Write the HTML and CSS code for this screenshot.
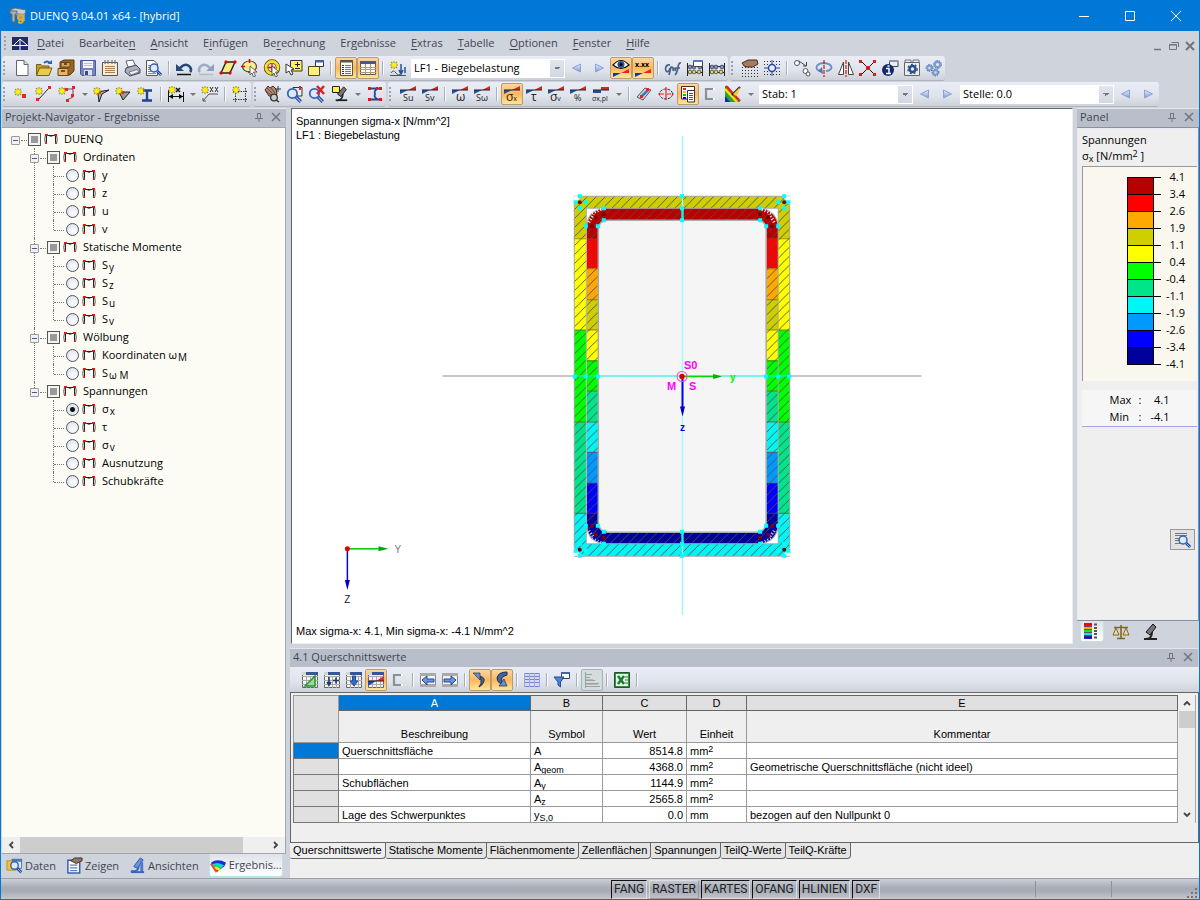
FILE: index.html
```html
<!DOCTYPE html>
<html lang="de">
<head>
<meta charset="utf-8">
<title>DUENQ 9.04.01 x64 - [hybrid]</title>
<link rel="stylesheet" href="styles.css">
</head>
<body>
<svg class="defs" aria-hidden="true">
<defs>
<pattern id="hatch" width="9" height="9" patternUnits="userSpaceOnUse"><path d="M-1 10L10-1M-1 1L1-1M8 10L10 8" stroke="#505050" stroke-width=".9" fill="none"/></pattern>
<linearGradient id="gb" x2="0" y2="1"><stop offset="0" stop-color="#e8f0ff"/><stop offset="1" stop-color="#8099d0"/></linearGradient>
</defs>
<symbol id="star" viewBox="0 0 8 8"><path d="M4 0V8M0 4H8M1 1L7 7M7 1L1 7" stroke="#a89400" stroke-width="1.1"/><circle cx="4" cy="4" r="2.300" fill="#fff200"/></symbol>
<symbol id="wave" viewBox="0 0 18 18"><path d="M1 5H9L1 9Z" fill="#24509c"/><path d="M9 5L17 1V5Z" fill="#c33020"/><path d="M1 5H17" stroke="#223" stroke-width="1"/></symbol>
<symbol id="glass" viewBox="0 0 18 18"><path d="M11.500 11.500L16 16" stroke="#23499c" stroke-width="3"/><path d="M12 12L16 16" stroke="#9db8f0" stroke-width="1"/><circle cx="8.500" cy="8.500" r="4.200" fill="#dcebfc" stroke="#3c62b4" stroke-width="1.600"/></symbol>
<symbol id="cursor" viewBox="0 0 18 18"><path d="M9 7L16 13L12.500 13L14.500 17L12.500 18L11 14L9 16Z" fill="#fff" stroke="#444" stroke-width=".8"/></symbol>
<symbol id="sheetgrid" viewBox="0 0 18 18"><path d="M1.500 1.500H16.500V16.500H1.500Z" fill="#f3f3f0" stroke="#666"/><path d="M1 5.500H17M1 9.500H17M1 13.500H17M5.500 5V17M9.500 5V17M13.500 5V17" stroke="#aaa"/><path d="M1 1H17V4H1Z" fill="#36569a"/><path d="M1 1H5V4H1Z" fill="#d5d5cf"/></symbol>
<symbol id="new" viewBox="0 0 18 18"><path d="M3.500 1.500H11L15 5.500V16.500H3.500Z" fill="#fff" stroke="#666"/><path d="M11 1.500V5.500H15" fill="#ddd" stroke="#666"/></symbol>
<symbol id="open" viewBox="0 0 18 18"><path d="M1.500 16V5.500H6L7.500 7H14V16Z" fill="#c79a22" stroke="#796019"/><path d="M1.500 16.500L4.500 9H17L14 16.500Z" fill="#e6cd52" stroke="#796019"/><path d="M9 4Q12 1 15 4" fill="none" stroke="#2a65a8" stroke-width="1.800"/><path d="M12.500 5H17V1Z" fill="#2a65a8"/></symbol>
<symbol id="cabinet" viewBox="0 0 18 18"><path d="M3 3L7 1H17V12L13 16H3Z" fill="#9a6422" stroke="#5e3b12"/><path d="M4 3.500H13V8H4Z" fill="#dca656" stroke="#6c4518"/><path d="M1 9.500H11V16.500H1Z" fill="#e8b364" stroke="#6c4518"/><path d="M7 5H10M4 12H8" stroke="#333" stroke-width="1.500"/></symbol>
<symbol id="save" viewBox="0 0 18 18"><path d="M1.500 1.500H16.500V16.500H3L1.500 15Z" fill="#7482bd" stroke="#4d5a94"/><path d="M4 2H14V9H4Z" fill="#f4f2fb"/><path d="M5 4.500H13M5 6.500H13" stroke="#bcbcd0"/><path d="M5 11H13V16.500H5Z" fill="#dfe2ee"/><path d="M6 12H9V16H6Z" fill="#334a8d"/></symbol>
<symbol id="pad" viewBox="0 0 18 18"><path d="M1.500 3.500H16.500V16.500H1.500Z" fill="#f3eedc" stroke="#5a5648"/><path d="M4 1V5M7 1V5M11 1V5M14 1V5" stroke="#777" stroke-width="1.200"/><path d="M4 7.500H14M4 9.500H14M4 11.500H14M4 13.500H14" stroke="#b17e50"/></symbol>
<symbol id="print" viewBox="0 0 18 18"><path d="M5 8L3 2L10 1L13 8Z" fill="#fff" stroke="#666"/><path d="M3 9L13 6L17 10V14L7 17L2 13Z" fill="#aab0c0" stroke="#3d4558"/><path d="M6 13L14 10.500L16 13L8 16Z" fill="#eee" stroke="#555" stroke-width=".7"/></symbol>
<symbol id="preview" viewBox="0 0 18 18"><path d="M1.500 1.500H9L12.500 5V16.500H1.500Z" fill="#fff" stroke="#555"/><path d="M3 6.500H11M3 8.500H11M3 10.500H11M3 12.500H11M3 14.500H11" stroke="#888"/><use href="#glass" x="1" y="1" width="17" height="17"/></symbol>
<symbol id="undo" viewBox="0 0 18 18"><path d="M5 9Q11 3 15 8Q17 11 15 13" fill="none" stroke="#234a7a" stroke-width="2.600"/><path d="M1 5V12H9Z" fill="#234a7a"/><path d="M2 15.500H16" stroke="#111" stroke-width="1.500"/></symbol>
<symbol id="redo" viewBox="0 0 18 18"><path d="M13 9Q7 3 3 8Q1 11 3 13" fill="none" stroke="#9cacc2" stroke-width="2.600"/><path d="M17 5V12H9Z" fill="#8fa3be"/><path d="M2 15.500H16" stroke="#bbb" stroke-width="1.500"/></symbol>
<symbol id="para" viewBox="0 0 18 18"><path d="M7 3H16L11 14H2Z" fill="#f3ee7c" stroke="#222" stroke-width="1.400"/><path d="M5 3H9M7 1V5M14 3H18M16 1V5M9 14H13M11 12V16M0 14H4M2 12V16" stroke="#e00" stroke-width="1.100"/></symbol>
<symbol id="ellsel" viewBox="0 0 18 18"><ellipse cx="8.500" cy="7.500" rx="7" ry="5.500" fill="#f7f08d" stroke="#4c4830" stroke-width="1.200"/><path d="M0 7.500H4M8.500 0V4M7 13H11" stroke="#e00" stroke-width="1.500"/><use href="#cursor" width="18" height="18"/></symbol>
<symbol id="ringsel" viewBox="0 0 18 18"><circle cx="9" cy="8.500" r="6" fill="none" stroke="#514700" stroke-width="4.400"/><circle cx="9" cy="8.500" r="6" fill="none" stroke="#f8dc2e" stroke-width="2.800"/><path d="M9 5V12M5 8.500H12" stroke="#e00" stroke-width="1.300"/><use href="#cursor" width="18" height="18"/></symbol>
<symbol id="plussel" viewBox="0 0 18 18"><path d="M5.500 1.500H17V12H5.500Z" fill="#fff15a" stroke="#333"/><path d="M10 5.500H15M12.500 3V8M10 9.500H15" stroke="#222"/><path d="M1 5L9 10L6 11L8 15L6 16L4 12L1 14Z" fill="#fff" stroke="#333"/></symbol>
<symbol id="winsel" viewBox="0 0 18 18"><path d="M1.500 7.500H12.500V16.500H1.500Z" fill="#fff07a" stroke="#554c12"/><path d="M8.500 1.500H16.500V7.500H8.500Z" fill="#fff" stroke="#334"/><path d="M8 1H17V3.500H8Z" fill="#46639e"/></symbol>
<symbol id="navi" viewBox="0 0 18 18"><path d="M3.500 1.500H15.500V16.500H3.500Z" fill="#fbfbf6" stroke="#5a5340"/><path d="M3 2.500H16" stroke="#555" stroke-width="2"/><path d="M5 6.500H7M5 8.500H7M5 10.500H7M5 12.500H7M5 14.500H7" stroke="#333"/><path d="M8 6.500H14M8 8.500H14M8 10.500H14M8 12.500H14M8 14.500H14" stroke="#777"/></symbol>
<symbol id="table" viewBox="0 0 18 18"><path d="M1.500 2.500H16.500V15.500H1.500Z" fill="#fffdf2" stroke="#5c5c5c"/><path d="M1 2H17V5H1Z" fill="#4b568a"/><path d="M1 8.500H17M1 10.500H17M1 13.500H17M6.500 5V15M11.500 5V15" stroke="#a89880"/></symbol>
<symbol id="loadcase" viewBox="0 0 18 18"><use href="#star" x="1" y="2" width="8" height="8"/><path d="M2 14Q4 10 7 14T12 14" fill="none" stroke="#555"/><path d="M12 5V14M10 11L12 15L14 11M16 8V14" stroke="#265499" stroke-width="1.500" fill="none"/><path d="M1 16.500H17" stroke="#555"/></symbol>
<symbol id="left" viewBox="0 0 18 18"><path d="M12.500 5V13L4.500 9Z" fill="url(#gb)" stroke="#8ba3d6"/></symbol>
<symbol id="right" viewBox="0 0 18 18"><path d="M5.500 5V13L13.500 9Z" fill="url(#gb)" stroke="#8ba3d6"/></symbol>
<symbol id="eye" viewBox="0 0 18 18"><path d="M1 6Q9-3 17 6Q9 13 1 6Z" fill="#f8f8ff" stroke="#111" stroke-width="1.200"/><circle cx="9" cy="5.500" r="3.500" fill="#275299"/><circle cx="9" cy="5.500" r="1.500" fill="#000"/><path d="M1 14H9L1 18Z" fill="#1235a8"/><path d="M9 14L17 10V14Z" fill="#e22"/></symbol>
<symbol id="redblue" viewBox="0 0 18 18"><path d="M1 14H9L1 18Z" fill="#1235a8"/><path d="M9 14L17 10V14Z" fill="#e22"/></symbol>
<symbol id="grf" viewBox="0 0 18 18"><path d="M6 6Q2 5 1.500 10Q2 14 5 12L6 9M5 16L7 8Q10 8 9 12M10 10Q12 8 11 12M11 16Q13 14 14 8Q15 3 17 4M11.500 9H16" fill="none" stroke="#4c6088" stroke-width="1.700"/></symbol>
<symbol id="abacus" viewBox="0 0 18 18"><path d="M1.500 4V17M16.500 4V17M1 7.500H17M1 13.500H17" stroke="#222"/><g fill="#8193d0" stroke="#333" stroke-width=".7"><circle cx="4" cy="8" r="1.900"/><circle cx="8" cy="8" r="1.900"/><circle cx="14" cy="8" r="1.900"/></g><g fill="#e0d36e" stroke="#333" stroke-width=".7"><circle cx="4" cy="13" r="1.900"/><circle cx="8" cy="13" r="1.900"/><circle cx="13" cy="13" r="1.900"/></g></symbol>
<symbol id="abacus2" viewBox="0 0 18 18"><use href="#abacus" width="18" height="18"/><path d="M7.500 1.500H16.500V7.500H7.500Z" fill="#fff" stroke="#445"/><path d="M7 1H17V3H7Z" fill="#597bbb"/></symbol>
<symbol id="handgrid" viewBox="0 0 18 18"><path d="M1 8.500H17M1 11.500H17M1 14.500H17M1 17.500H17" stroke="#333" stroke-dasharray="1 2"/><path d="M1 4L7 1H16L17 5L12 8H6L3 7Z" fill="#a67b60" stroke="#49301e"/></symbol>
<symbol id="gridcirc" viewBox="0 0 18 18"><path d="M1 2.500H17M1 5.500H17M1 12.500H17M1 15.500H17" stroke="#333" stroke-width="1.200" stroke-dasharray="1 2"/><path d="M9 1V17M1 9H17" stroke="#2846a3"/><circle cx="9" cy="9" r="3.500" fill="#e8eefb" stroke="#2846a3" stroke-width="1.500"/></symbol>
<symbol id="move" viewBox="0 0 18 18"><circle cx="4" cy="4" r="2.500" fill="#fff" stroke="#555"/><circle cx="12.500" cy="12" r="2.500" fill="#fff" stroke="#555"/><circle cx="15" cy="15" r="2" fill="#fff" stroke="#555"/><path d="M6 2L13 7M10 7H13.500V3" fill="none" stroke="#444"/></symbol>
<symbol id="rotate" viewBox="0 0 18 18"><path d="M7 12Q1 12 1.500 8Q3 4 9 4Q17 5 16.500 9Q15 12 11 12" fill="none" stroke="#6c90c4" stroke-width="1.800"/><path d="M7 8L3 12L8 15Z" fill="#4e78b2"/><path d="M9 1V18" stroke="#e01010" stroke-width="1.200" stroke-dasharray="4 1"/></symbol>
<symbol id="mirror" viewBox="0 0 18 18"><path d="M6.500 3V15.500H1.500ZM11.500 3V15.500H16.500Z" fill="#fff" stroke="#444"/><path d="M9 1V18" stroke="#e01010" stroke-width="1.200" stroke-dasharray="4 1"/></symbol>
<symbol id="cross" viewBox="0 0 18 18"><path d="M2 2L16 16M16 2L2 16" stroke="#111"/><path d="M0 1H3V4H0ZM14 1H17V4H14ZM0 14H3V17H0ZM14 14H17V17H14ZM7 7H11V11H7Z" fill="#e01818"/></symbol>
<symbol id="info" viewBox="0 0 18 18"><path d="M8.500 1.500H17V7.500H8.500Z" fill="#eee" stroke="#445"/><path d="M8 1H17V3H8Z" fill="#9099a8"/><circle cx="7" cy="11" r="6" fill="#142a6e"/><path d="M5 9.500H8V14M5 14.500H10M6.500 7H8.500" stroke="#fff" stroke-width="1.500" fill="none"/></symbol>
<symbol id="optgear" viewBox="0 0 18 18"><path d="M1.500 3.500H16.500V16.500H1.500Z" fill="#eee" stroke="#666"/><path d="M2 3V1H8V3M10 3V1H16V3" stroke="#777" fill="none"/><circle cx="9.500" cy="10" r="3" fill="none" stroke="#284e91" stroke-width="2.500"/><circle cx="9.500" cy="10" r="4.700" fill="none" stroke="#284e91" stroke-width="1.300" stroke-dasharray="2 2"/></symbol>
<symbol id="gears" viewBox="0 0 18 18"><g fill="none" stroke="#7a9ad2" stroke-width="1.800"><circle cx="4.500" cy="9" r="2.100"/><circle cx="12.500" cy="5.500" r="2.500"/><circle cx="10.500" cy="13.500" r="2.100"/></g><g fill="none" stroke="#244b91" stroke-dasharray="1.200 1.200"><circle cx="4.500" cy="9" r="3.400"/><circle cx="12.500" cy="5.500" r="3.900"/><circle cx="10.500" cy="13.500" r="3.400"/></g></symbol>
<symbol id="node" viewBox="0 0 18 18"><use href="#star" x="3" y="3" width="8" height="8"/><path d="M11 9H15V13H11Z" fill="#e22"/></symbol>
<symbol id="line" viewBox="0 0 18 18"><path d="M4 15L15 3" stroke="#222"/><path d="M2 13H5V16H2ZM14 1H17V4H14Z" fill="#e22"/><use href="#star" x="1" y="2" width="8" height="8"/></symbol>
<symbol id="poly" viewBox="0 0 18 18"><path d="M5 4H15V12L9 15" stroke="#555" fill="none"/><path d="M7 3H10V6H7ZM14 1H17V4H14ZM13 9H16V12H13ZM8 14H11V17H8Z" fill="#e22"/><use href="#star" x="0" y="2" width="8" height="8"/></symbol>
<symbol id="anga" viewBox="0 0 18 18"><path d="M4 7L16 5L9 9L6 17L5 9Z" fill="#aaa" stroke="#222"/><path d="M5 6H8V9H5Z" fill="#e22"/><use href="#star" x="0" y="2" width="8" height="8"/></symbol>
<symbol id="angb" viewBox="0 0 18 18"><path d="M4 7H15L8 15Z" fill="#999" stroke="#222"/><path d="M6 6H9V9H6Z" fill="#e22"/><use href="#star" x="0" y="2" width="8" height="8"/></symbol>
<symbol id="ibeam" viewBox="0 0 18 18"><path d="M5 5.500H15M10 5V15M5 15.500H15" stroke="#1c4393" stroke-width="2.400"/><use href="#star" x="0" y="2" width="8" height="8"/></symbol>
<symbol id="dim" viewBox="0 0 18 18"><path d="M1.500 5V17M16.500 7V17M1 11.500H17" stroke="#111"/><path d="M2 11.500L6 9V14ZM16 11.500L12 9V14Z"/><path d="M9 3L13 7M13 3L9 7" stroke="#111" stroke-width="1.500"/><use href="#star" x="1" y="1" width="8" height="8"/></symbol>
<symbol id="dimxx" viewBox="0 0 18 18"><path d="M2 16L8 9H17M2 13V16H5" stroke="#555" fill="none"/><path d="M9 2L12 7M12 2L9 7M14 2L17 7M17 2L14 7" stroke="#333"/><use href="#star" x="0" y="1" width="8" height="8"/></symbol>
<symbol id="stargrid" viewBox="0 0 18 18"><path d="M4.500 3V17M14.500 3V17M2 6.500H17M2 14.500H17" stroke="#333" stroke-dasharray="1.500 1"/><use href="#star" x="1" y="1" width="8" height="8"/></symbol>
<symbol id="hand" viewBox="0 0 18 18"><path d="M1 5L4 1L6 3L9 1L12 4L13 9L10 12L5 11Z" fill="#b38a75" stroke="#4c2d22"/><path d="M3 3L8 8M6 2L11 8M2 6L7 10" stroke="#6c4535"/><path d="M14 1V7M11 4H17" stroke="#333"/><circle cx="10" cy="12.500" r="3.300" fill="#ccc" stroke="#333" stroke-width="1.300"/><path d="M12 15L15 17" stroke="#333" stroke-width="1.500"/></symbol>
<symbol id="zoomwin" viewBox="0 0 18 18"><path d="M7 2.500H16V11H7Z" fill="#eee" stroke="#333"/><path d="M14 1V5" stroke="#e22" stroke-width="2"/><use href="#glass" x="-3" y="-1" width="20" height="20"/></symbol>
<symbol id="zoomx" viewBox="0 0 18 18"><use href="#glass" x="-3" y="-1" width="20" height="20"/><path d="M9 1L16 9M16 1L9 9" stroke="#d22" stroke-width="2.500"/></symbol>
<symbol id="micro" viewBox="0 0 18 18"><path d="M3 16Q11 17 11 9" stroke="#222" stroke-width="2" fill="none"/><path d="M5 9L12 1L15 4L9 12Z" fill="#777" stroke="#111"/><path d="M5 15H16V17H5Z" fill="#222"/></symbol>
<symbol id="micro2" viewBox="0 0 18 18"><use href="#micro" x="2" width="16" height="18"/><path d="M1.500 1.500H8.500V7.500H1.500Z" fill="#fff04c" stroke="#222"/></symbol>
<symbol id="channel" viewBox="0 0 18 18"><path d="M3 3.500H15M3 14.500H15M14 3Q7 5 9 9Q7 13 14 15" stroke="#26468e" stroke-width="1.800" fill="none"/><path d="M2 2H5V5H2ZM13 2H16V5H13ZM2 13H5V16H2ZM13 13H16V16H13ZM10 2H12V4H10Z" fill="#e11"/></symbol>
<symbol id="plates" viewBox="0 0 18 18"><path d="M2 12L10 3L16 5L8 15Z" fill="#cdd5e6" stroke="#555"/><path d="M6 12L14 4" stroke="#4a72c1" stroke-width="2.500"/><path d="M11 3H14V6H11ZM5 10H8V13H5Z" fill="#e22"/></symbol>
<symbol id="target" viewBox="0 0 18 18"><ellipse cx="9" cy="9" rx="6.500" ry="5" fill="none" stroke="#333" stroke-dasharray="3 1"/><path d="M1 9H17M9 2V16" stroke="#e22" stroke-width="1.200" stroke-dasharray="6 1"/></symbol>
<symbol id="panelic" viewBox="0 0 18 18"><path d="M2.500 1.500H15.500V14H2.500Z" fill="#fff" stroke="#333"/><path d="M8.500 5.500H15.500V17H8.500Z" fill="#fff" stroke="#333"/><path d="M4 4H7" stroke="#e22" stroke-width="2"/><path d="M4 7H7" stroke="#fb0" stroke-width="2"/><path d="M4 10H7" stroke="#0b3" stroke-width="2"/><path d="M4 13H7" stroke="#00d" stroke-width="2"/><path d="M10 8.500H14M10 10.500H14M10 12.500H14M10 14.500H14" stroke="#555"/></symbol>
<symbol id="cshape" viewBox="0 0 18 18"><path d="M13 4H5V14H13" stroke="#909090" stroke-width="2.200" fill="none"/><path d="M12 4H14M12 14H14" stroke="#fff" stroke-width="2"/></symbol>
<symbol id="colors" viewBox="0 0 18 18"><path d="M1 1H4L16 17H1Z" fill="#20a23d"/><path d="M2 1L16 16" stroke="#e22" stroke-width="2.200"/><path d="M1 4L13 17" stroke="#fd0" stroke-width="2.500"/><path d="M1 11L6 17H1Z" fill="#22b"/><path d="M8 10L16 2" stroke="#222" stroke-width="2"/><path d="M9 9L16 2L14 9L12 11Z" fill="#f4cb35"/></symbol>
<symbol id="pin" viewBox="0 0 10 10"><path d="M3.500 1V6M6.500 1V6M3 1.500H7M1 6.500H9M5 7V10" fill="none" stroke="#70757e"/></symbol>
<symbol id="close" viewBox="0 0 10 10"><path d="M1 1L9 9M9 1L1 9" stroke="#70757e" stroke-width="1.500"/></symbol>
<symbol id="section" viewBox="0 0 14 12"><path d="M2.500 11V2.500H11.500V11M5 2.500Q7 4 9 2.500" fill="none" stroke="#222"/><path d="M1.500 2Q0 6 1.500 11M12.500 2Q14 6 12.500 11" fill="none" stroke="#555"/><path d="M1 1H4V3H1ZM10 1H13V3H10ZM2 9H3V11H2ZM11 9H12V11H11Z" fill="#e11"/></symbol>
<symbol id="data" viewBox="0 0 18 18"><path d="M6.500 2.500H16.500V12H6.500Z" fill="#dce6f8" stroke="#4c76b8"/><path d="M6 2H17V5H6Z" fill="#4c76b8"/><path d="M1 4H6L7 6H11V14H1Z" fill="#f2c530" stroke="#a17b18" stroke-width=".7"/><use href="#glass" x="1" y="1" width="17" height="17"/></symbol>
<symbol id="show" viewBox="0 0 18 18"><path d="M2 3.500H14.500V17H2Z" fill="#fff" stroke="#3761a9" stroke-width="1.600"/><path d="M4 8.500H12M4 11.500H12M4 14.500H12" stroke="#5d83c1" stroke-width="1.300"/><path d="M5 4L9 1H17V4L11 7Z" fill="#8d7566" stroke="#403128"/></symbol>
<symbol id="bmicro" viewBox="0 0 18 18"><path d="M2 15Q11 16 10 9" stroke="#3663bd" stroke-width="2" fill="none"/><path d="M5 10L12 1L15 3L9 12Z" fill="#6992e0" stroke="#2c56ab"/><path d="M12 3V16H15V6Z" fill="#4b76ca"/><path d="M2 15H16V17H2Z" fill="#3663bd"/></symbol>
<symbol id="rainbow" viewBox="0 0 18 18"><path d="M1 6Q8 1 17 6L15 10L7 16Z" fill="#1b2bdc"/><path d="M2 8Q8 4 15 9L7 16Z" fill="#10d8d0"/><path d="M3 10Q8 7 12 12L7 16Z" fill="#1bdc2a"/><path d="M4 11Q8 9 11 13L7 16Z" fill="#f6ef20"/><path d="M5 13L9 14L7 16Z" fill="#f11"/><path d="M1 7L7 16" stroke="#e44" stroke-width="2"/></symbol>
<symbol id="scale" viewBox="0 0 18 18"><path d="M9 2V15M2 4.500H16M5 15.500H13" stroke="#806721" stroke-width="1.600"/><path d="M1 12L4 5L7 12ZM11 12L14 5L17 12Z" fill="#e8dcae" stroke="#806721"/></symbol>
<symbol id="legend" viewBox="0 0 18 18"><path d="M1 1H9V17H1Z" fill="#555"/><path d="M1 2.500H9" stroke="#f00" stroke-width="2"/><path d="M1 6H9" stroke="#fa0" stroke-width="2"/><path d="M1 9H9" stroke="#0e0" stroke-width="2"/><path d="M1 12H9" stroke="#0ee" stroke-width="2"/><path d="M1 15.500H9" stroke="#00f" stroke-width="2"/><path d="M11 2.500H14M11 6H14M11 9H14M11 12H14M11 15.500H14" stroke="#555" stroke-width="2"/></symbol>
<symbol id="find" viewBox="0 0 18 18"><path d="M1 2.500H13M1 4.500H13M1 7.500H8M1 9.500H7M1 12.500H7" stroke="#777"/><use href="#glass" x="1" y="1" width="17" height="17"/></symbol>
<symbol id="t1" viewBox="0 0 18 18"><use href="#sheetgrid" width="18" height="18"/><path d="M4 15L14 5V15Z" fill="#9bdc94" stroke="#2b9138" stroke-width="1.500"/></symbol>
<symbol id="t2" viewBox="0 0 18 18"><use href="#sheetgrid" width="18" height="18"/><path d="M6 6V14M4 11L6 14L8 11M10 9.500H16M13 6.500V12.500" stroke="#20396e" stroke-width="1.600" fill="none"/></symbol>
<symbol id="t3" viewBox="0 0 18 18"><use href="#sheetgrid" width="18" height="18"/><path d="M7.500 5H10.500V10H13L9 15L5 10H7.500Z" fill="#3c6cc0" stroke="#204b9a"/></symbol>
<symbol id="t4" viewBox="0 0 18 18"><use href="#sheetgrid" width="18" height="18"/><path d="M1 10H9L1 15Z" fill="#2547b5"/><path d="M9 10L17 5V10Z" fill="#e22"/><path d="M1 10H17" stroke="#222"/></symbol>
<symbol id="t5" viewBox="0 0 18 18"><path d="M1.500 2.500H16.500V15.500H1.500Z" fill="#f3f3f0" stroke="#888"/><path d="M1 2H17V5H1ZM1 13H17V16H1Z" fill="#aaa"/><path d="M3 9L8 5V8H15V11H8V14Z" fill="#6e92dc" stroke="#274a9a"/></symbol>
<symbol id="t6" viewBox="0 0 18 18"><path d="M1.500 2.500H16.500V15.500H1.500Z" fill="#f3f3f0" stroke="#888"/><path d="M1 2H17V5H1ZM1 13H17V16H1Z" fill="#aaa"/><path d="M15 9L10 5V8H3V11H10V14Z" fill="#6e92dc" stroke="#274a9a"/></symbol>
<symbol id="hookr" viewBox="0 0 18 18"><path d="M8 5Q14 6 13 10Q12 14 8 16Q11 12 10 9Z" fill="#3d65a8" stroke="#1e3050"/><path d="M2 2H9V9Z" fill="#668cce" stroke="#1e3050" stroke-width=".7"/></symbol>
<symbol id="hookl" viewBox="0 0 18 18"><path d="M14 1Q5 1 4 7Q4 11 8 13L9 10Q7 6 14 4Z" fill="#3d65a8" stroke="#1e3050"/><path d="M6 15H14L11 8Z" fill="#668cce" stroke="#1e3050" stroke-width=".7"/></symbol>
<symbol id="bluet" viewBox="0 0 18 18"><path d="M1 2H17V16H1Z" fill="#d4d8f4"/><path d="M1 2.500H17M1 5.500H17M1 8.500H17M1 11.500H17M1 15.500H17" stroke="#7a84c8"/><path d="M1.500 2V16M6.500 2V16M11.500 2V16M16.500 2V16" stroke="#a0a7dc"/></symbol>
<symbol id="filter" viewBox="0 0 18 18"><path d="M8.500 1.500H16.500V7.500H8.500Z" fill="#fff" stroke="#445"/><path d="M8 1H17V3H8Z" fill="#46639e"/><path d="M1 6H11L7.500 11V16L5 14V11Z" fill="#4d83d9" stroke="#254b91"/></symbol>
<symbol id="bars" viewBox="0 0 18 18"><path d="M2.500 1V17M2 3.500H9M2 6.500H7M2 9.500H12M2 12.500H16M2 15.500H17" stroke="#90a5a6"/><path d="M3 13.500H15M3 8.500H10" stroke="#d3aab2"/></symbol>
<symbol id="xls" viewBox="0 0 18 18"><path d="M1.500 1.500H16.500V16.500H1.500Z" fill="#3c8b4c" stroke="#1d5728"/><path d="M3 3H15V15H3Z" fill="#e4f5e4"/><path d="M5 5L11 13M11 5L5 13" stroke="#1d7a33" stroke-width="2.500"/><path d="M12 6H15M12 9H15M12 12H15" stroke="#1d7a33"/></symbol>
</svg>

<div class="window">
<header class="titlebar">
  <svg class="appicon" viewBox="0 0 18 18"><path d="M1 3L6 1L17 3L16 7L8 9Z" fill="#c9d0d4" stroke="#61717b"/><path d="M1 4H8V7H6V15H3V7H1Z" fill="#a9b3b6" stroke="#5d6a70"/><path d="M8 6L16 7V14H9Z" fill="#8f9a9b"/><path d="M15 9Q9 7 9 11Q10 14 14 12V8V14Q13 17 9 15" fill="none" stroke="#e5ad25" stroke-width="2"/></svg>
  <h1>DUENQ 9.04.01 x64 - [hybrid]</h1>
  <button aria-label="Minimieren"><svg viewBox="0 0 10 10"><path d="M0 5.500H10"/></svg></button>
  <button aria-label="Maximieren"><svg viewBox="0 0 10 10"><path d="M.5.500H9.500V9.500H.5Z"/></svg></button>
  <button aria-label="Schließen"><svg viewBox="0 0 10 10"><path d="M0 0L10 10M10 0L0 10"/></svg></button>
</header>

<nav class="menubar">
  <i class="grip"></i>
  <svg class="logo" viewBox="0 0 16 13"><path d="M0 0H16V13H0Z" fill="#1d2c66"/><path d="M0 8.500H16M2 8L8 2V13M8 2L15 8" stroke="#fff" fill="none"/></svg>
  <button><u>D</u>atei</button><button>Bearbeite<u>n</u></button><button><u>A</u>nsicht</button><button>E<u>i</u>nfügen</button><button>Be<u>r</u>echnung</button><button>Er<u>g</u>ebnisse</button><button><u>E</u>xtras</button><button><u>T</u>abelle</button><button><u>O</u>ptionen</button><button><u>F</u>enster</button><button><u>H</u>ilfe</button>
  <span class="mdi"><button aria-label="Fenster minimieren"><svg viewBox="0 0 10 10"><path d="M1 8.500H8" stroke-width="1.500"/></svg></button><button aria-label="Fenster wiederherstellen"><svg viewBox="0 0 10 10"><path d="M2.500 1.500H9.500V6M.5 3.500H7.500V8.500H.5ZM0 4H8"/></svg></button><button aria-label="Fenster schließen"><svg viewBox="0 0 10 10"><path d="M1 1L9 9M9 1L1 9" stroke-width="2"/></svg></button></span>
</nav>

<div class="toolrow">
  <div class="toolbar"><i class="grip"></i>
    <button aria-label="Neu"><svg><use href="#new"/></svg></button><button aria-label="Öffnen"><svg><use href="#open"/></svg></button><button aria-label="Manager"><svg><use href="#cabinet"/></svg></button><button aria-label="Speichern"><svg><use href="#save"/></svg></button><button aria-label="Protokoll"><svg><use href="#pad"/></svg></button><button aria-label="Drucken"><svg><use href="#print"/></svg></button><button aria-label="Vorschau"><svg><use href="#preview"/></svg></button><i class="sep"></i>
    <button aria-label="Rückgängig"><svg><use href="#undo"/></svg></button><button aria-label="Wiederherstellen"><svg><use href="#redo"/></svg></button><button aria-label="Rhomboid"><svg><use href="#para"/></svg></button><button aria-label="Ellipse"><svg><use href="#ellsel"/></svg></button><button aria-label="Ring"><svg><use href="#ringsel"/></svg></button><button aria-label="Auswahl"><svg><use href="#plussel"/></svg></button><button aria-label="Spezialauswahl"><svg><use href="#winsel"/></svg></button><i class="sep"></i>
    <button class="on" aria-label="Navigator"><svg><use href="#navi"/></svg></button><button class="on" aria-label="Tabelle"><svg><use href="#table"/></svg></button><i class="sep"></i>
    <button aria-label="Lastfall neu"><svg><use href="#loadcase"/></svg></button>
    <select aria-label="Lastfall"><option>LF1 - Biegebelastung</option></select>
    <button aria-label="Zurück"><svg><use href="#left"/></svg></button><button aria-label="Vor"><svg><use href="#right"/></svg></button><button class="on" aria-label="Ergebnisse"><svg><use href="#eye"/></svg></button><button class="on" aria-label="Werte"><svg viewBox="0 0 18 18"><use href="#redblue"/><text x="1" y="8" class="glyph-b">x.xx</text></svg></button><i class="sep"></i>
    <button aria-label="Berechnung"><svg><use href="#grf"/></svg></button><button aria-label="Parameter"><svg><use href="#abacus2"/></svg></button><button aria-label="Berechnen"><svg><use href="#abacus"/></svg></button>
  </div>
  <div class="toolbar"><i class="grip"></i>
    <button aria-label="Raster"><svg><use href="#handgrid"/></svg></button><button aria-label="Rasterursprung"><svg><use href="#gridcirc"/></svg></button><i class="sep"></i>
    <button aria-label="Verschieben"><svg><use href="#move"/></svg></button><button aria-label="Drehen"><svg><use href="#rotate"/></svg></button><button aria-label="Spiegeln"><svg><use href="#mirror"/></svg></button><button aria-label="Verbinden"><svg><use href="#cross"/></svg></button><button aria-label="Info"><svg><use href="#info"/></svg></button><button aria-label="Einstellungen"><svg><use href="#optgear"/></svg></button><button aria-label="Optionen"><svg><use href="#gears"/></svg></button>
  </div>
</div>
<div class="toolrow">
  <div class="toolbar"><i class="grip slim"></i>
    <button aria-label="Knoten"><svg><use href="#node"/></svg></button><button class="wide" aria-label="Linie"><svg><use href="#line"/></svg></button><button class="wide" aria-label="Polygon"><svg><use href="#poly"/></svg></button><button class="more" aria-label="Mehr"></button><button aria-label="Winkel"><svg><use href="#anga"/></svg></button><button aria-label="Blech"><svg><use href="#angb"/></svg></button><button aria-label="Profil"><svg><use href="#ibeam"/></svg></button><i class="sep"></i>
    <button aria-label="Bemaßung"><svg><use href="#dim"/></svg></button><button class="more" aria-label="Mehr"></button><button aria-label="Kommentar"><svg><use href="#dimxx"/></svg></button><i class="sep"></i><button aria-label="Hilfslinien"><svg><use href="#stargrid"/></svg></button>
  </div>
  <div class="toolbar"><i class="grip"></i>
    <button aria-label="Bewegen"><svg><use href="#hand"/></svg></button><button aria-label="Zoom"><svg><use href="#zoomwin"/></svg></button><button aria-label="Zoom aus"><svg><use href="#zoomx"/></svg></button><button class="wide" aria-label="Sichtbarkeit"><svg><use href="#micro2"/></svg></button><button class="more" aria-label="Mehr"></button><button aria-label="Querschnitt"><svg><use href="#channel"/></svg></button>
  </div>
  <div class="toolbar"><i class="grip"></i>
    <button aria-label="Su"><svg viewBox="0 0 18 18"><use href="#wave"/><text x="4" y="16" class="glyph">Su</text></svg></button><button aria-label="Sv"><svg viewBox="0 0 18 18"><use href="#wave"/><text x="4" y="16" class="glyph">Sv</text></svg></button><i class="sep"></i><button aria-label="Omega"><svg viewBox="0 0 18 18"><use href="#wave"/><text x="5" y="16" class="glyph-l">ω</text></svg></button><button aria-label="S Omega"><svg viewBox="0 0 18 18"><use href="#wave"/><text x="3" y="16" class="glyph">Sω</text></svg></button><i class="sep"></i>
    <button class="on" aria-label="Sigma x"><svg viewBox="0 0 18 18"><use href="#wave"/><text x="3" y="16" class="glyph-l">σ<tspan class="glyph-s">x</tspan></text></svg></button><button aria-label="Tau"><svg viewBox="0 0 18 18"><use href="#wave"/><text x="6" y="16" class="glyph-l">τ</text></svg></button><button aria-label="Sigma v"><svg viewBox="0 0 18 18"><use href="#wave"/><text x="3" y="16" class="glyph-l">σ<tspan class="glyph-s">v</tspan></text></svg></button><button aria-label="Ausnutzung"><svg viewBox="0 0 18 18"><use href="#wave"/><text x="5" y="16" class="glyph">%</text></svg></button><button class="wide" aria-label="Sigma x,pl"><svg viewBox="0 0 18 18"><path d="M1 5H9V8H1Z" fill="#24509c"/><path d="M9 2H17V5H9Z" fill="#c33020"/><path d="M1 5H17" stroke="#223"/><text x="0" y="16" class="glyph-s">σx,pl</text></svg></button><button class="more" aria-label="Mehr"></button><i class="sep"></i>
    <button aria-label="Bleche"><svg><use href="#plates"/></svg></button><button aria-label="Schwerpunkt"><svg><use href="#target"/></svg></button><button class="on" aria-label="Panel"><svg><use href="#panelic"/></svg></button><button aria-label="Profil"><svg><use href="#cshape"/></svg></button><button class="wide" aria-label="Farben"><svg><use href="#colors"/></svg></button><button class="more" aria-label="Mehr"></button>
    <select aria-label="Stab"><option>Stab: 1</option></select><button aria-label="Zurück"><svg><use href="#left"/></svg></button><button aria-label="Vor"><svg><use href="#right"/></svg></button>
    <select aria-label="Stelle"><option>Stelle: 0.0</option></select><button aria-label="Zurück"><svg><use href="#left"/></svg></button><button aria-label="Vor"><svg><use href="#right"/></svg></button>
  </div>
</div>

<main class="workspace">
<aside class="navigator">
  <div class="dockhead"><h2>Projekt-Navigator - Ergebnisse</h2><button aria-label="Anheften"><svg><use href="#pin"/></svg></button><button aria-label="Schließen"><svg><use href="#close"/></svg></button></div>
  <div class="treebox">
  <ul class="tree">
    <li class="root"><button class="exp" aria-label="Einklappen"></button><label><input type="checkbox"><svg><use href="#section"/></svg>DUENQ</label>
    <ul>
      <li><button class="exp" aria-label="Einklappen"></button><label><input type="checkbox"><svg><use href="#section"/></svg>Ordinaten</label>
        <ul class="leaves">
          <li><label><input type="radio" name="res"><svg><use href="#section"/></svg>y</label></li>
          <li><label><input type="radio" name="res"><svg><use href="#section"/></svg>z</label></li>
          <li><label><input type="radio" name="res"><svg><use href="#section"/></svg>u</label></li>
          <li><label><input type="radio" name="res"><svg><use href="#section"/></svg>v</label></li>
        </ul></li>
      <li><button class="exp" aria-label="Einklappen"></button><label><input type="checkbox"><svg><use href="#section"/></svg>Statische Momente</label>
        <ul class="leaves">
          <li><label><input type="radio" name="res"><svg><use href="#section"/></svg>S<sub>y</sub></label></li>
          <li><label><input type="radio" name="res"><svg><use href="#section"/></svg>S<sub>z</sub></label></li>
          <li><label><input type="radio" name="res"><svg><use href="#section"/></svg>S<sub>u</sub></label></li>
          <li><label><input type="radio" name="res"><svg><use href="#section"/></svg>S<sub>v</sub></label></li>
        </ul></li>
      <li><button class="exp" aria-label="Einklappen"></button><label><input type="checkbox"><svg><use href="#section"/></svg>Wölbung</label>
        <ul class="leaves">
          <li><label><input type="radio" name="res"><svg><use href="#section"/></svg>Koordinaten&nbsp;ω<sub>M</sub></label></li>
          <li><label><input type="radio" name="res"><svg><use href="#section"/></svg>S<sub>ω M</sub></label></li>
        </ul></li>
      <li><button class="exp" aria-label="Einklappen"></button><label><input type="checkbox"><svg><use href="#section"/></svg>Spannungen</label>
        <ul class="leaves">
          <li><label><input type="radio" name="res" checked><svg><use href="#section"/></svg>σ<sub>x</sub></label></li>
          <li><label><input type="radio" name="res"><svg><use href="#section"/></svg>τ</label></li>
          <li><label><input type="radio" name="res"><svg><use href="#section"/></svg>σ<sub>v</sub></label></li>
          <li><label><input type="radio" name="res"><svg><use href="#section"/></svg>Ausnutzung</label></li>
          <li><label><input type="radio" name="res"><svg><use href="#section"/></svg>Schubkräfte</label></li>
        </ul></li>
    </ul></li>
  </ul>
  <div class="hscroll"><svg viewBox="0 0 16 16"><path d="M10 5L7 8L10 11"/></svg><i></i><svg viewBox="0 0 16 16"><path d="M6 5L9 8L6 11"/></svg></div>
  </div>
  <div class="docktabs">
    <button><svg><use href="#data"/></svg>Daten</button><button><svg><use href="#show"/></svg>Zeigen</button><button><svg><use href="#bmicro"/></svg>Ansichten</button><button class="cur"><svg><use href="#rainbow"/></svg>Ergebnis...</button>
  </div>
</aside>

<div class="right">
<div class="upper">
<section class="canvas">
  <svg class="drawing" viewBox="291 108 780 535" role="img" aria-label="Querschnitt">
    <path d="M442 375.500H573M789 375.500H920" stroke="#909090"/>
    <rect x="573" y="196" width="216" height="359.500" fill="#fff"/>
    <g shape-rendering="crispEdges">
      <path d="M573 196H789V238H777V208H585V238H573Z" fill="#cfcf00"/>
      <path d="M573 238H585V330H573ZM777 238H789V330H777Z" fill="#ff0"/>
      <path d="M573 330H585V421H573ZM777 330H789V421H777Z" fill="#0f0"/>
      <path d="M573 421H585V513H573ZM777 421H789V513H777Z" fill="#00e48a"/>
      <path d="M573 513H585V543H777V513H789V555H573Z" fill="#00f5f5"/>
      <path d="M586 268H597V299H586ZM765 268H777V299H765Z" fill="#ffa800"/>
      <path d="M586 299H597V330H586ZM765 299H777V330H765Z" fill="#cfcf00"/>
      <path d="M586 330H597V360H586ZM765 330H777V360H765Z" fill="#ff0"/>
      <path d="M586 360H597V391H586ZM765 360H777V391H765Z" fill="#0f0"/>
      <path d="M586 391H597V421H586ZM765 391H777V421H765Z" fill="#00e48a"/>
      <path d="M586 421H597V451H586ZM765 421H777V451H765Z" fill="#00f5f5"/>
      <path d="M586 451H597V482H586ZM765 451H777V482H765Z" fill="#0099ff"/>
      <path d="M586 482H597V513H586ZM765 482H777V513H765Z" fill="#00f"/>
      <path d="M586 238H597V268H586ZM765 238H777V268H765Z" fill="#f00"/>
    </g>
    <path d="M586 238V226Q587 210 603 208H759Q775 210 777 226V238H765V229Q764 220 756 220H607Q598 220 597 229V238Z" fill="#b70000"/>
    <path d="M586 513V525Q587 541 603 543H759Q775 541 777 525V513H765V522Q764 531 756 531H607Q598 531 597 522V513Z" fill="#00009d"/>
    <path d="M573 196H789V555.500H573ZM585.500 208V543H777V208ZM585.500 226V525Q587 541 603 543H759Q775 541 777 525V226Q775 210 759 208H603Q587 210 585.500 226ZM597.500 229V522Q598 531 607 531.500H756Q764 531 765 522V229Q764 220 756 220H607Q598 220 597.500 229Z" fill="url(#hatch)" fill-rule="evenodd"/>
    <path d="M573 238.500H597M573 329.500H597M573 421.500H597M573 512.500H597M765 238.500H789M765 329.500H789M765 421.500H789M765 512.500H789M586 268.500H597M586 299.500H597M586 360.500H597M586 390.500H597M586 451.500H597M586 482.500H597M765 268.500H777M765 299.500H777M765 360.500H777M765 390.500H777M765 451.500H777M765 482.500H777" stroke="#804000" stroke-opacity=".65"/>
    <path d="M597.500 229V522Q598 531 607 531.500H756Q764 531 765 522V229Q764 220 756 220H607Q598 220 597.500 229Z" fill="#f5f5f5" stroke="#aaa" stroke-width="1.500"/>
    <path d="M573.500 196V555.500H788.500V196ZM585.500 208V543H777V208ZM586 226Q587 210 603 208M777 226Q775 210 759 208M586 525Q587 541 603 543M777 525Q775 541 759 543" fill="none" stroke="#a9a9a9"/>
    <path d="M591 213L601 209M588 222L593 214M770 213L760 209M773 222L768 214" stroke="#fff" stroke-width="3" stroke-dasharray="1 2"/>
    <path d="M591 538L601 542M588 530L593 537M770 538L760 542M773 530L768 537" stroke="#c9caff" stroke-width="3" stroke-dasharray="1 2"/>
    <path d="M681.500 136V614" stroke="#a3f8f8" stroke-width="1.500"/>
    <path d="M573 375.500H789" stroke="#00f0f0"/>
    <path d="M573 196H581L573 204ZM789 196H781L789 204ZM573 555H581L573 547ZM789 555H781L789 547Z" fill="#fff"/>
    <path d="M573 200h4v4h-4zM577 194h4v4h-4zM577 206h4v4h-4zM583 200h4v4h-4zM784 200h5v4h-5zM781 194h4v4h-4zM781 206h4v4h-4zM775 200h4v4h-4zM601 206h4v4h-4zM601 218h4v4h-4zM583 224h4v4h-4zM595 224h4v4h-4zM757 206h4v4h-4zM757 218h4v4h-4zM775 224h4v4h-4zM763 224h4v4h-4zM573 548h4v4h-4zM577 553h4v4h-4zM577 541h4v4h-4zM583 548h4v4h-4zM785 548h4v4h-4zM781 553h4v4h-4zM781 541h4v4h-4zM775 548h4v4h-4zM601 529h4v4h-4zM601 541h4v4h-4zM583 523h4v4h-4zM595 523h4v4h-4zM757 529h4v4h-4zM757 541h4v4h-4zM775 523h4v4h-4zM763 523h4v4h-4zM679 194h4v4h-4zM679 206h4v4h-4zM679 218h4v4h-4zM679 529h4v4h-4zM679 541h4v4h-4zM679 553h4v4h-4zM572 374h4v4h-4zM583 374h4v4h-4zM595 374h4v4h-4zM763 374h4v4h-4zM775 374h4v4h-4zM786 374h4v4h-4z" fill="#0ff"/>
    <path d="M681.500 209V219M681.500 531V543" stroke="#0ff" stroke-width="2"/>
    <g fill="#800000"><circle cx="579" cy="202" r="2"/><circle cx="783" cy="202" r="2"/><circle cx="579" cy="549" r="2"/><circle cx="783" cy="549" r="2"/><circle cx="603" cy="214" r="2"/><circle cx="591" cy="226" r="2"/><circle cx="595" cy="217" r="2"/><circle cx="759" cy="214" r="2"/><circle cx="771" cy="226" r="2"/><circle cx="767" cy="217" r="2"/><circle cx="603" cy="537" r="2"/><circle cx="591" cy="525" r="2"/><circle cx="595" cy="534" r="2"/><circle cx="759" cy="537" r="2"/><circle cx="771" cy="525" r="2"/><circle cx="767" cy="534" r="2"/></g>
    <path d="M681 376H712" stroke="#00d800" stroke-width="1.500"/><path d="M712 373.500L721 376L712 378.500Z" fill="#00b000"/>
    <path d="M681.500 376V408" stroke="#00f" stroke-width="2"/><path d="M679 406H684L681.500 416Z" fill="#0000c8"/>
    <circle cx="681" cy="376" r="5" fill="none" stroke="#f4c"/><circle cx="681" cy="376" r="2.700" fill="#d00000"/>
    <g class="mag"><text x="683" y="369">S0</text><text x="666" y="389">M</text><text x="688" y="389">S</text></g>
    <text x="729" y="380" class="ax bold" fill="#00f000">y</text><text x="679" y="430" class="ax bold" fill="#00f">z</text>
    <path d="M347 548H378" stroke="#00c800" stroke-width="1.500"/><path d="M378 545.500L388 548L378 550.500Z" fill="#00a800"/>
    <path d="M347 548V580" stroke="#00f" stroke-width="1.500"/><path d="M344.500 579H349.500L347 589Z" fill="#0000c8"/><circle cx="347" cy="548" r="2.500" fill="#e00000"/>
    <text x="394" y="552" class="ax" fill="#777">Y</text><text x="344" y="602" class="ax" fill="#222">Z</text>
  </svg>
  <p>Spannungen sigma-x [N/mm^2]<br>LF1 : Biegebelastung</p>
  <p>Max sigma-x: 4.1, Min sigma-x: -4.1 N/mm^2</p>
</section>

<aside class="panel">
  <div class="dockhead"><h2>Panel</h2><button aria-label="Anheften"><svg><use href="#pin"/></svg></button><button aria-label="Schließen"><svg><use href="#close"/></svg></button></div>
  <div class="panelbody">
    <div class="ptitle">Spannungen<br>σ<sub>x</sub> [N/mm<sup>2</sup> ]</div>
    <div class="scale">
      <div class="swatches"><i class="c1"></i><i class="c2"></i><i class="c3"></i><i class="c4"></i><i class="c5"></i><i class="c6"></i><i class="c7"></i><i class="c8"></i><i class="c9"></i><i class="c10"></i><i class="c11"></i></div>
      <ol><li>4.1</li><li>3.4</li><li>2.6</li><li>1.9</li><li>1.1</li><li>0.4</li><li>-0.4</li><li>-1.1</li><li>-1.9</li><li>-2.6</li><li>-3.4</li><li>-4.1</li></ol>
    </div>
    <dl><dt>Max</dt><dd>:</dd><dd>4.1</dd><dt>Min</dt><dd>:</dd><dd>-4.1</dd></dl>
    <button class="find" aria-label="Details"><svg><use href="#find"/></svg></button>
  </div>
  <div class="ptabs"><button class="cur" aria-label="Farbskala"><svg><use href="#legend"/></svg></button><button aria-label="Faktoren"><svg><use href="#scale"/></svg></button><button aria-label="Filter"><svg><use href="#micro"/></svg></button></div>
</aside>
</div>

<section class="sheet">
  <div class="dockhead"><h2>4.1 Querschnittswerte</h2><button aria-label="Anheften"><svg><use href="#pin"/></svg></button><button aria-label="Schließen"><svg><use href="#close"/></svg></button></div>
  <div class="toolbar flat">
    <button aria-label="Eingabe"><svg><use href="#t1"/></svg></button><button aria-label="Zeile einfügen"><svg><use href="#t2"/></svg></button><button aria-label="Zeile anhängen"><svg><use href="#t3"/></svg></button><button class="on" aria-label="Ergebnisse"><svg><use href="#t4"/></svg></button><button aria-label="Profil"><svg><use href="#cshape"/></svg></button><i class="sep"></i>
    <button aria-label="Vorige"><svg><use href="#t5"/></svg></button><button aria-label="Nächste"><svg><use href="#t6"/></svg></button><i class="sep"></i><button class="on" aria-label="Auswahl"><svg><use href="#hookr"/></svg></button><button class="on" aria-label="Markierung"><svg><use href="#hookl"/></svg></button><i class="sep"></i><button aria-label="Linien"><svg><use href="#bluet"/></svg></button><i class="sep"></i><button aria-label="Filter"><svg><use href="#filter"/></svg></button><i class="sep"></i><button class="press" aria-label="Balken"><svg><use href="#bars"/></svg></button><i class="sep"></i><button aria-label="Excel"><svg><use href="#xls"/></svg></button><i class="sep"></i>
  </div>
  <div class="gridbox">
    <div class="gridrow">
    <table>
      <colgroup><col class="k0"><col class="k1"><col class="k2"><col class="k3"><col class="k4"><col></colgroup>
      <thead>
        <tr class="letters"><th rowspan="2" class="corner"></th><th class="sel">A</th><th>B</th><th>C</th><th>D</th><th>E</th></tr>
        <tr class="names"><th>Beschreibung</th><th>Symbol</th><th>Wert</th><th>Einheit</th><th>Kommentar</th></tr>
      </thead>
      <tbody>
        <tr><th class="sel"></th><td>Querschnittsfläche</td><td>A</td><td class="n">8514.8</td><td>mm<sup>2</sup></td><td></td></tr>
        <tr><th></th><td></td><td>A<sub>geom</sub></td><td class="n">4368.0</td><td>mm<sup>2</sup></td><td>Geometrische Querschnittsfläche (nicht ideel)</td></tr>
        <tr><th></th><td>Schubflächen</td><td>A<sub>y</sub></td><td class="n">1144.9</td><td>mm<sup>2</sup></td><td></td></tr>
        <tr><th></th><td></td><td>A<sub>z</sub></td><td class="n">2565.8</td><td>mm<sup>2</sup></td><td></td></tr>
        <tr><th></th><td>Lage des Schwerpunktes</td><td>y<sub>S,0</sub></td><td class="n">0.0</td><td>mm</td><td>bezogen auf den Nullpunkt 0</td></tr>
      </tbody>
    </table>
    <div class="vscroll"><svg viewBox="0 0 16 16"><path d="M5 10L8 7L11 10"/></svg><i></i><svg viewBox="0 0 16 16"><path d="M5 6L8 9L11 6"/></svg></div>
    </div>
  </div>
  <div class="sheettabs"><button class="cur">Querschnittswerte</button><button>Statische Momente</button><button>Flächenmomente</button><button>Zellenflächen</button><button>Spannungen</button><button>TeilQ-Werte</button><button>TeilQ-Kräfte</button></div>
</section>
</div>
</main>

<footer class="statusbar">
  <button>FANG</button><button class="off">RASTER</button><button>KARTES</button><button>OFANG</button><button>HLINIEN</button><button>DXF</button>
  <span></span><span></span>
  <svg viewBox="0 0 12 12"><path d="M8 1h2v2h-2zM4 5h2v2h-2zM8 5h2v2h-2zM0 9h2v2h-2zM4 9h2v2h-2zM8 9h2v2h-2z" fill="#70757e"/></svg>
</footer>
</div>
</body>
</html>
```
FILE: styles.css
```css
* { box-sizing: border-box; }
body {
  margin: 0;
  font: 11px/16px "Open Sans", "Noto Sans", sans-serif;
  color: #000;
}
button { font: inherit; color: inherit; border: 0; padding: 0; background: none; }
h1, h2, p, ul, ol, dl, dd { margin: 0; padding: 0; }
ul, ol { list-style: none; }
svg { display: block; }
.defs { position: absolute; width: 0; height: 0; }
.window {
  min-height: 100vh;
  display: flex;
  flex-direction: column;
  background: #cfd3dc;
  border: solid #0078d7;
  border-width: 0 1px 1px;
}

/* title and menu */
.titlebar { height: 31px; display: flex; align-items: center; background: #0078d7; color: #fff; }
.appicon { width: 18px; height: 18px; margin: 0 3px 0 8px; }
.titlebar h1 { flex: 1; font: inherit; }
.titlebar button { width: 46px; height: 30px; display: grid; place-items: center; }
.titlebar button svg { width: 10px; height: 10px; fill: none; stroke: #fff; overflow: visible; }
.menubar { height: 25px; display: flex; align-items: center; color: #3f4552; padding: 0 0 1px 2px; }
.menubar > button { margin-right: 15px; white-space: nowrap; }
.menubar u { text-underline-offset: 2px; }
.logo { width: 16px; height: 13px; margin-right: 9px; }
.mdi { margin-left: auto; display: flex; gap: 6px; padding: 6px 4px 0 0; }
.mdi svg { width: 10px; height: 10px; fill: none; stroke: #70757e; }

/* tool bars */
.grip { width: 9px; height: 16px; flex: none; background: radial-gradient(circle, #9ba1ae 1px, transparent 1px) 0 0 / 4px 4px repeat-y; }
.grip.slim { width: 7px; }
.toolrow { display: flex; gap: 2px; padding-left: 1px; height: 26px; }
.toolbar {
  display: flex;
  align-items: center;
  height: 25px;
  border-radius: 3px;
  background: linear-gradient(#eaedf6, #dfe3ec 60%, #cdd1da);
  border-bottom: 1px solid #b0b4be;
}
.toolbar button { width: 22px; height: 22px; display: grid; place-items: center; flex: none; }
.toolbar button svg { width: 18px; height: 18px; }
.toolbar button.wide { width: 24px; }
.toolbar button.more { width: 12px; }
.toolbar button.more::before { content: ""; border: 3px solid transparent; border-top-color: #777; margin-top: 3px; }
.toolbar button.on { border: 1px solid #b99c6e; border-radius: 2px; background: linear-gradient(#fbd6a4, #ffb75d 50%, #ffe696); }
.toolbar button.press { border: 1px solid #a9b1b4; border-radius: 2px; background: #d5dcdd; }
.sep { width: 8px; height: 14px; flex: none; background: linear-gradient(90deg, transparent 3px, #a8adb8 3px 4px, #fff 4px 5px, transparent 5px); }
.toolbar select {
  width: 154px;
  height: 19px;
  margin: 0 1px 0 2px;
  border: 1px solid #fff;
  border-radius: 0;
  padding: 0 2px;
  appearance: none;
  color: #000;
  font: 11px/16px "Open Sans", "Noto Sans", sans-serif;
  background: linear-gradient(45deg, transparent 50%, #777 50%) right 7px top 7px / 3px 3px no-repeat, linear-gradient(-45deg, transparent 50%, #777 50%) right 4px top 7px / 3px 3px no-repeat, linear-gradient(#e2e5ed, #d3d7e0) right / 14px 100% no-repeat #fff;
}
.glyph { font: 9px "Open Sans", sans-serif; fill: #222; }
.glyph-l { font: 12px "Open Sans", sans-serif; fill: #222; }
.glyph-s { font-size: 7px; fill: #222; }
.glyph-b { font: bold 7px "Open Sans", sans-serif; }

/* docks */
.workspace { flex: 1; display: grid; grid-template-columns: 285px minmax(0, 1fr); column-gap: 3px; padding-left: 1px; }
.dockhead { height: 19px; display: flex; align-items: center; gap: 7px; padding: 0 5px 2px 3px; background: #b9bfca; color: #3f4552; border-top: 1px solid #e2e5ea; }
.dockhead h2 { flex: 1; font: inherit; }
.dockhead svg { width: 10px; height: 10px; }
.navigator { display: flex; flex-direction: column; width: 284px; }
.treebox { flex: 1; display: flex; flex-direction: column; justify-content: space-between; background: #fcfcf4; border: solid #a2a6b0; border-width: 1px 1px 1px 0; }
.tree { padding: 2px 0 0 9px; line-height: 18px; }
.tree li { position: relative; }
.tree label { display: flex; align-items: center; height: 18px; white-space: nowrap; }
.tree label svg { width: 14px; height: 12px; margin: 0 6px 0 3px; }
.tree input { appearance: none; width: 13px; height: 13px; margin: 0; flex: none; }
.tree input[type="checkbox"] { border: 1px solid #555; box-shadow: inset 0 0 0 2px #f3f3f3; background: #999; }
.tree input[type="radio"] { border: 1px solid #4e5560; border-radius: 50%; background: radial-gradient(circle at 60% 65%, #fff, #d4dbe6); }
.tree input[type="radio"]:checked { background: radial-gradient(circle, #111 2px, #e4e8ef 3px); }
.tree sub { font-size: 10px; line-height: 10px; padding: 4px 0 0 1px; }
.exp { float: left; width: 9px; height: 9px; margin: 6px 8px 0 0; border: 1px solid #999; border-radius: 1px; background: linear-gradient(#3a5ba5, #3a5ba5) center / 5px 1px no-repeat #f2f2f2; position: relative; z-index: 1; }
.exp::after { content: ""; position: absolute; left: 9px; top: 3px; width: 6px; border-top: 1px dotted #777; }
.tree ul { padding-left: 19px; }
.tree ul > li::before { content: ""; position: absolute; left: 4px; top: 0; height: 100%; border-left: 1px dotted #777; }
.tree ul > li:last-child::before { height: 10px; }
.tree .leaves > li { padding-left: 17px; height: 18px; }
.tree .leaves > li::after { content: ""; position: absolute; left: 5px; top: 10px; width: 10px; border-top: 1px dotted #777; }
.hscroll { display: flex; height: 16px; background: #efefef; }
.hscroll i { width: 223px; background: #cdcdcd; margin-right: auto; }
.hscroll svg, .vscroll svg { width: 16px; height: 16px; fill: none; stroke: #444; stroke-width: 1.8; margin: 0 1px; }
.docktabs { height: 24px; display: flex; gap: 10px; padding: 0 0 1px 4px; color: #3f4552; white-space: nowrap; }
.docktabs button { display: flex; align-items: center; gap: 2px; }
.docktabs svg { width: 17px; height: 17px; }
.docktabs .cur, .ptabs .cur { background: linear-gradient(#dfe3e8, #fff); border: 1px solid #b8e6e8; border-top: 0; border-radius: 0 0 3px 3px; }

.right { display: flex; flex-direction: column; min-width: 0; }
.upper { flex: 1; display: grid; grid-template-columns: minmax(0, 1fr) 122px; column-gap: 4px; margin-bottom: 4px; padding-left: 1px; }
.canvas { position: relative; background: #fff; border: 1px solid #777; border-color: #666 #eee #eee #666; display: flex; flex-direction: column; justify-content: space-between; padding: 5px 4px; font: 11px/14px "Liberation Sans", sans-serif; }
.drawing { position: absolute; left: -1px; top: -1px; width: calc(100% + 2px); height: calc(100% + 2px); }
.canvas p { position: relative; }
.ax { font: 10px "Liberation Sans", sans-serif; }
.ax.bold { font-weight: bold; }
.mag { font: bold 11px "Liberation Sans", sans-serif; fill: #f0f; }

.panel { display: flex; flex-direction: column; }
.panelbody { flex: 1; display: flex; flex-direction: column; background: #efefef; border: solid #8c9098; border-width: 1px 1px 1px 0; padding: 4px 1px 0 5px; box-shadow: inset 0 0 0 1px #e8ecf7; }
.ptitle sub, .ptitle sup { font-size: 9px; line-height: 8px; }
.ptitle sub { vertical-align: -2px; }
.ptitle sup { vertical-align: 3px; }
.ptitle { height: 34px; }
.scale { display: flex; height: 215px; padding: 10px 12px 0 44px; background: #faf7ef; border: solid #999; border-width: 1px 0 0 1px; justify-content: space-between; }
.swatches { width: 34px; }
.swatches i { display: block; width: 27px; height: 17px; border: solid #000; border-width: 1px 1px 0; position: relative; }
.swatches i::after { content: ""; position: absolute; left: 26px; top: -1px; width: 7px; border-top: 1px solid #000; }
.swatches .c11 { height: 18px; border-bottom-width: 1px; }
.swatches .c11::before { content: ""; position: absolute; left: 26px; bottom: -1px; width: 7px; border-top: 1px solid #000; }
.c1 { background: #b70000; } .c2 { background: #f00; } .c3 { background: #ffa800; } .c4 { background: #cfcf00; }
.c5 { background: #ff0; } .c6 { background: #0f0; } .c7 { background: #00e48a; } .c8 { background: #00f5f5; }
.c9 { background: #0099ff; } .c10 { background: #00f; } .c11 { background: #00009d; }
.scale ol { margin-top: -9px; text-align: right; line-height: 17px; }
.panelbody dl { display: grid; grid-template-columns: 24px 8px 28px; justify-content: center; line-height: 17px; margin-top: 9px; padding: 1px 0; background: #f6f6f6; border-bottom: 1px solid #a4a4e4; }
.panelbody dd { text-align: right; }
.find { width: 25px; height: 21px; margin: 102px 2px 0 auto; border: 1px solid #999; background: #e2e2e2; display: grid; place-items: center; }
.find svg { width: 18px; height: 18px; }
.ptabs { height: 23px; display: flex; gap: 5px; padding: 0 0 2px 3px; }
.ptabs button { width: 24px; display: grid; place-items: center; }
.ptabs svg { width: 18px; height: 18px; }

/* table window */
.sheet .dockhead { margin-right: 1px; }
.flat { border-radius: 0; padding-left: 9px; border-bottom: 0; }
.gridbox { background: #efefef; border: 1px solid #666; padding: 2px 2px 19px; font: 11px/15px "Liberation Sans", sans-serif; }
.gridrow { display: flex; gap: 1px; }
table { flex: 1; width: 100%; table-layout: fixed; border-collapse: collapse; background: #fff; }
.k0 { width: 45px; } .k1 { width: 192px; } .k2 { width: 72px; } .k3 { width: 84px; } .k4 { width: 60px; }
td, th { border: 1px solid #999; padding: 0 3px; height: 16px; font-weight: 400; white-space: nowrap; text-align: left; overflow: hidden; line-height: 14px; }
td.n { text-align: right; }
tbody th { background: #e0e0e0; border-color: #777; }
.letters th { height: 15px; line-height: 12px; text-align: center; background: #e0e0e0; border-color: #666; }
.names th { height: 32px; background: #efefef; text-align: center; vertical-align: bottom; padding-bottom: 1px; }
.letters .corner { border-color: #999; }
th.sel, .letters th.sel { background: #0078d7; color: #fff; }
td sub, td sup { font-size: 9px; line-height: 8px; }
td sub { vertical-align: -2px; }
td sup { vertical-align: 3px; }
.vscroll { width: 17px; border-right: 1px solid #aaa; display: flex; flex-direction: column; }
.vscroll svg { margin: 0; }
.vscroll i { height: 17px; background: #cdcdcd; margin-bottom: auto; }
.sheettabs { display: flex; height: 35px; align-items: flex-start; background: #efefef; font: 11px/15px "Liberation Sans", sans-serif; }
.sheettabs button { height: 16px; padding: 0 3px; border: solid #666; border-width: 0 1px 1px 0; border-radius: 0 0 4px 2px; background: #e4e4e4; white-space: nowrap; }
.sheettabs .cur { background: #efefef; }

/* status bar */
.statusbar { height: 21px; display: flex; align-items: center; gap: 2px; padding-left: 610px; background: linear-gradient(#cdd0d9, #a9aeb8 40%, #a6abb5 60%, #c3c7d0); border-top: 1px solid #999da6; font: 12px/16px Roboto, sans-serif; color: #222; }
.statusbar button { height: 19px; padding: 0 2px; border: 1px solid; border-color: #111 #ddd #ddd #111; }
.statusbar button.off { border-color: #ddd #999 #999 #ddd; }
.statusbar span { flex: 0 1 74px; margin-left: auto; height: 16px; border-left: 1px solid #8e929b; }
.statusbar span + span { margin-left: 0; }
.statusbar svg { width: 12px; height: 12px; align-self: flex-end; }
```
